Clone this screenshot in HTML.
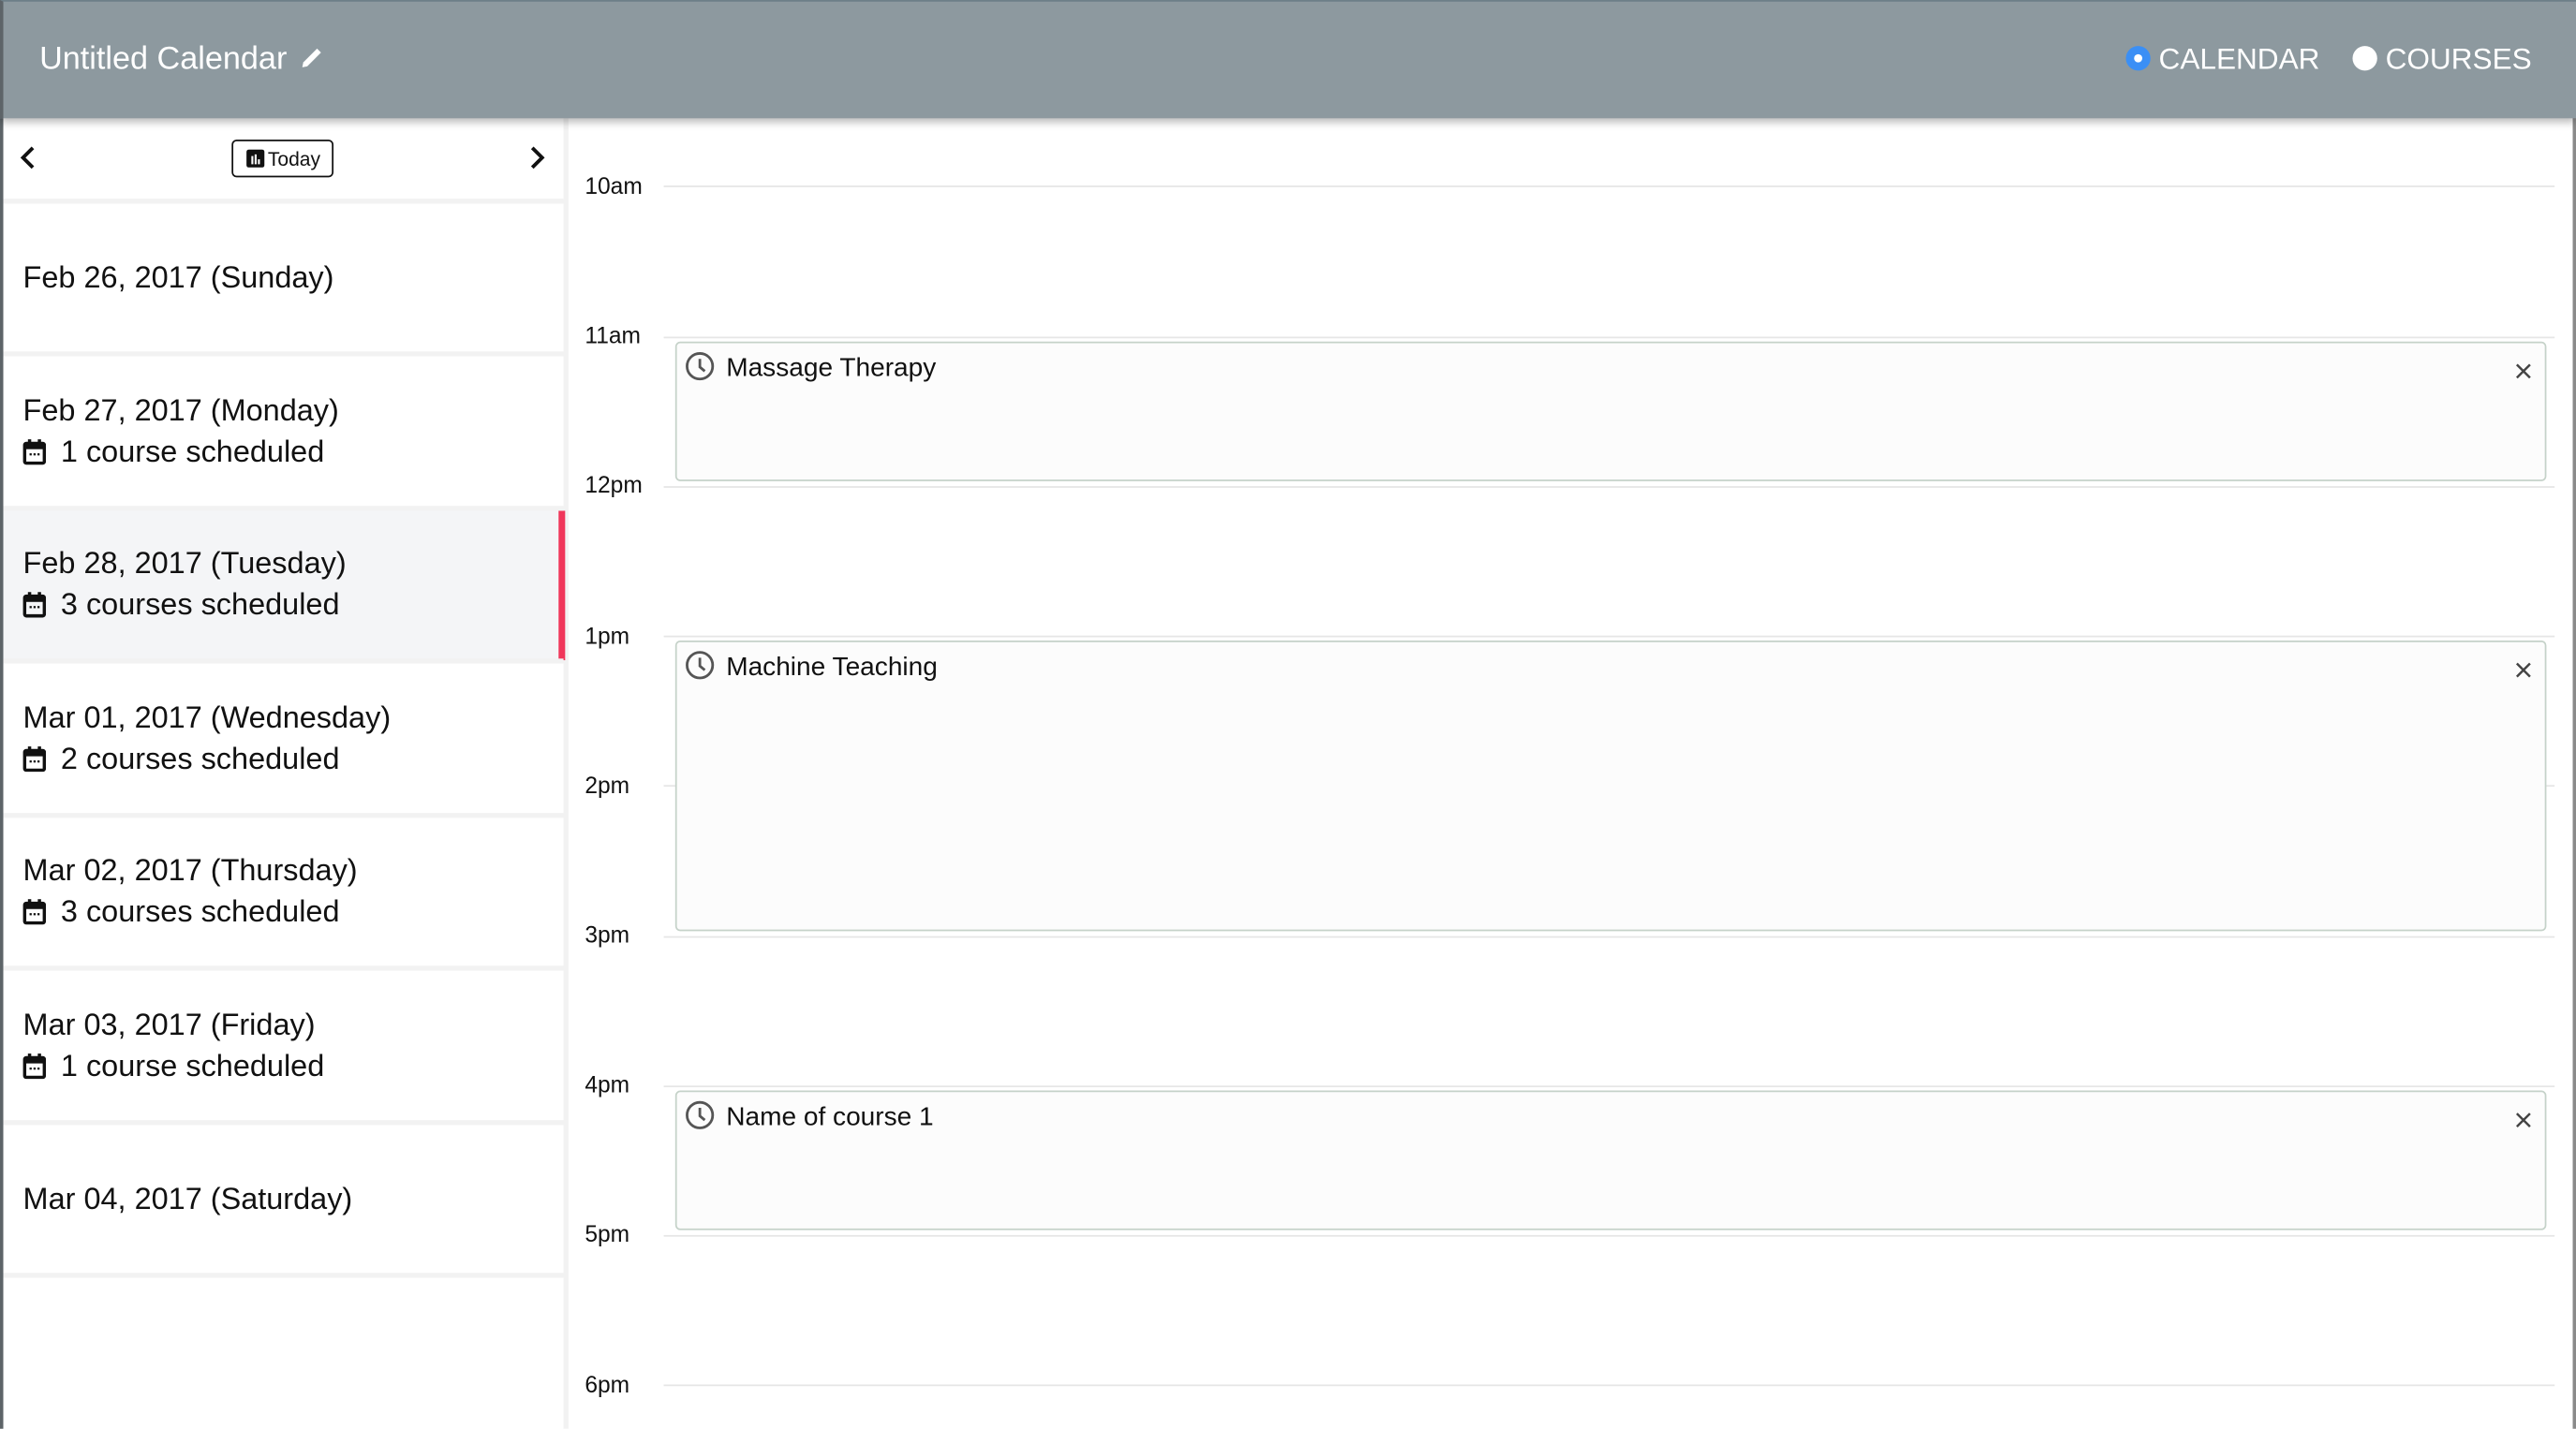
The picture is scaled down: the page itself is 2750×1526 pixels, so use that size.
<!DOCTYPE html>
<html><head><meta charset="utf-8"><style>
*{margin:0;padding:0;box-sizing:border-box}
html,body{width:2750px;height:1526px;overflow:hidden;background:#fff}
#w{position:absolute;left:0;top:0;width:1568px;height:870px;transform:scale(1.75383);transform-origin:0 0;font-family:"Liberation Sans",sans-serif;color:#111;background:#fff;overflow:hidden}
.a{position:absolute}
.hdr{left:0;top:0;width:1568px;height:72px;background:#8d999f;box-shadow:0 2px 5px rgba(0,0,0,.3);z-index:5;border-left:2px solid #5d6468;border-top:1px solid #6d7f88}
.ttl{left:22px;top:24px;font-size:19.5px;color:#fff}
.rad{top:25px;font-size:18px;color:#fff}
.sep{left:2px;width:341px;height:3px;background:#f2f2f2}
.row{left:2px;width:341px}
.d{position:absolute;left:12px;font-size:18.5px;white-space:nowrap}
.s{position:absolute;left:12px;font-size:18.5px;white-space:nowrap}
.s svg{vertical-align:-2px;margin-right:9px}
.tl{left:356px;font-size:14px}
.ln{left:404px;width:1151px;height:1px;background:#e6e6e6}
.ev{left:411px;width:1139px;border:1px solid #c5d2c9;border-radius:3px;background:#fcfcfc}
.ev .n{position:absolute;left:30px;top:7px;font-size:16px}
.ev svg.c{position:absolute;left:5px;top:5px}
.ev .x{position:absolute;right:8px;top:12px}
</style></head><body><div id="w">
<div class="a hdr">
 <div class="a ttl">Untitled Calendar <svg width="16" height="16" viewBox="0 0 16 16" style="vertical-align:-1px;margin-left:2px"><path d="M2 14 L2.6 11 L11 2.6 L13.4 5 L5 13.4 Z" fill="#fff"/></svg></div>
 <div class="a rad" style="left:1292px"><span style="display:inline-block;width:15px;height:15px;border-radius:50%;background:#3b8ff5;vertical-align:-1px;position:relative"><span style="position:absolute;left:5px;top:5px;width:5px;height:5px;border-radius:50%;background:#fff"></span></span> CALENDAR</div>
 <div class="a rad" style="left:1430px"><span style="display:inline-block;width:15px;height:15px;border-radius:50%;background:#fff;vertical-align:-1px"></span> COURSES</div>
</div>
<div class="a" style="left:0;top:0;width:2px;height:870px;background:#5d6468"></div>
<div class="a" style="left:1566px;top:0;width:2px;height:870px;background:#8a8a8a"></div>
<div class="a" style="left:343px;top:72px;width:3px;height:798px;background:#f2f2f2"></div>
<svg class="a" style="left:11px;top:89px" width="12" height="14" viewBox="0 0 12 14"><path d="M9 1 L3 7 L9 13" stroke="#111" stroke-width="2.2" fill="none"/></svg>
<svg class="a" style="left:321px;top:89px" width="12" height="14" viewBox="0 0 12 14"><path d="M3 1 L9 7 L3 13" stroke="#111" stroke-width="2.2" fill="none"/></svg>
<div class="a" style="left:141px;top:85px;width:62px;height:23px;border:1.3px solid #111;border-radius:3px;font-size:12px;padding:4px 0 0 8px;white-space:nowrap"><svg width="11" height="11" viewBox="0 0 11 11" style="vertical-align:-1px;margin-right:2px"><rect width="11" height="11" rx="1.5" fill="#111"/><rect x="3" y="4" width="1.2" height="5" fill="#fff"/><rect x="5" y="3" width="1.2" height="6" fill="#fff"/><rect x="7" y="6" width="1.2" height="3" fill="#fff"/></svg>Today</div>
<div class="a" style="left:2px;top:311px;width:341px;height:91px;background:#f4f5f7"></div>
<div class="a" style="left:340px;top:311px;width:4px;height:91px;background:#f0365a"></div>
<div class="a sep" style="top:121px"></div>
<div class="a sep" style="top:214px"></div>
<div class="a sep" style="top:308px"></div>
<div class="a sep" style="top:401px"></div>
<div class="a sep" style="top:495px"></div>
<div class="a sep" style="top:588px"></div>
<div class="a sep" style="top:682px"></div>
<div class="a sep" style="top:775px"></div>
<div class="a row" style="top:0">
<div class="d" style="top:158px">Feb 26, 2017 (Sunday)</div>
<div class="d" style="top:239px">Feb 27, 2017 (Monday)</div>
<div class="s" style="top:264px"><svg width="14" height="16" viewBox="0 0 14 16"><rect x="1" y="3" width="12" height="12" rx="1" fill="none" stroke="#111" stroke-width="2"/><rect x="1" y="3" width="12" height="3.5" fill="#111"/><rect x="3" y="0.5" width="2" height="3" fill="#111"/><rect x="9" y="0.5" width="2" height="3" fill="#111"/><rect x="4" y="9" width="1.3" height="1.3" fill="#111"/><rect x="6.4" y="9" width="1.3" height="1.3" fill="#111"/><rect x="8.8" y="9" width="1.3" height="1.3" fill="#111"/></svg>1 course scheduled</div>
<div class="d" style="top:332px">Feb 28, 2017 (Tuesday)</div>
<div class="s" style="top:357px"><svg width="14" height="16" viewBox="0 0 14 16"><rect x="1" y="3" width="12" height="12" rx="1" fill="none" stroke="#111" stroke-width="2"/><rect x="1" y="3" width="12" height="3.5" fill="#111"/><rect x="3" y="0.5" width="2" height="3" fill="#111"/><rect x="9" y="0.5" width="2" height="3" fill="#111"/><rect x="4" y="9" width="1.3" height="1.3" fill="#111"/><rect x="6.4" y="9" width="1.3" height="1.3" fill="#111"/><rect x="8.8" y="9" width="1.3" height="1.3" fill="#111"/></svg>3 courses scheduled</div>
<div class="d" style="top:426px">Mar 01, 2017 (Wednesday)</div>
<div class="s" style="top:451px"><svg width="14" height="16" viewBox="0 0 14 16"><rect x="1" y="3" width="12" height="12" rx="1" fill="none" stroke="#111" stroke-width="2"/><rect x="1" y="3" width="12" height="3.5" fill="#111"/><rect x="3" y="0.5" width="2" height="3" fill="#111"/><rect x="9" y="0.5" width="2" height="3" fill="#111"/><rect x="4" y="9" width="1.3" height="1.3" fill="#111"/><rect x="6.4" y="9" width="1.3" height="1.3" fill="#111"/><rect x="8.8" y="9" width="1.3" height="1.3" fill="#111"/></svg>2 courses scheduled</div>
<div class="d" style="top:519px">Mar 02, 2017 (Thursday)</div>
<div class="s" style="top:544px"><svg width="14" height="16" viewBox="0 0 14 16"><rect x="1" y="3" width="12" height="12" rx="1" fill="none" stroke="#111" stroke-width="2"/><rect x="1" y="3" width="12" height="3.5" fill="#111"/><rect x="3" y="0.5" width="2" height="3" fill="#111"/><rect x="9" y="0.5" width="2" height="3" fill="#111"/><rect x="4" y="9" width="1.3" height="1.3" fill="#111"/><rect x="6.4" y="9" width="1.3" height="1.3" fill="#111"/><rect x="8.8" y="9" width="1.3" height="1.3" fill="#111"/></svg>3 courses scheduled</div>
<div class="d" style="top:613px">Mar 03, 2017 (Friday)</div>
<div class="s" style="top:638px"><svg width="14" height="16" viewBox="0 0 14 16"><rect x="1" y="3" width="12" height="12" rx="1" fill="none" stroke="#111" stroke-width="2"/><rect x="1" y="3" width="12" height="3.5" fill="#111"/><rect x="3" y="0.5" width="2" height="3" fill="#111"/><rect x="9" y="0.5" width="2" height="3" fill="#111"/><rect x="4" y="9" width="1.3" height="1.3" fill="#111"/><rect x="6.4" y="9" width="1.3" height="1.3" fill="#111"/><rect x="8.8" y="9" width="1.3" height="1.3" fill="#111"/></svg>1 course scheduled</div>
<div class="d" style="top:719px">Mar 04, 2017 (Saturday)</div>
</div>
<div class="a tl" style="top:105px">10am</div><div class="a ln" style="top:113px"></div>
<div class="a tl" style="top:196px">11am</div><div class="a ln" style="top:205px"></div>
<div class="a tl" style="top:287px">12pm</div><div class="a ln" style="top:296px"></div>
<div class="a tl" style="top:379px">1pm</div><div class="a ln" style="top:387px"></div>
<div class="a tl" style="top:470px">2pm</div><div class="a ln" style="top:478px"></div>
<div class="a tl" style="top:561px">3pm</div><div class="a ln" style="top:570px"></div>
<div class="a tl" style="top:652px">4pm</div><div class="a ln" style="top:661px"></div>
<div class="a tl" style="top:743px">5pm</div><div class="a ln" style="top:752px"></div>
<div class="a tl" style="top:835px">6pm</div><div class="a ln" style="top:843px"></div>
<div class="a ev" style="top:208px;height:85px"><svg class="c" width="18" height="18" viewBox="0 0 18 18"><circle cx="9" cy="9" r="7.8" fill="none" stroke="#555" stroke-width="1.6"/><path d="M9 4.5 V9.5 L12 12" fill="none" stroke="#555" stroke-width="1.6"/></svg><div class="n">Massage Therapy</div><svg class="x" width="10" height="10" viewBox="0 0 10 10"><path d="M1 1L9 9M9 1L1 9" stroke="#444" stroke-width="1.4"/></svg></div>
<div class="a ev" style="top:390px;height:177px"><svg class="c" width="18" height="18" viewBox="0 0 18 18"><circle cx="9" cy="9" r="7.8" fill="none" stroke="#555" stroke-width="1.6"/><path d="M9 4.5 V9.5 L12 12" fill="none" stroke="#555" stroke-width="1.6"/></svg><div class="n">Machine Teaching</div><svg class="x" width="10" height="10" viewBox="0 0 10 10"><path d="M1 1L9 9M9 1L1 9" stroke="#444" stroke-width="1.4"/></svg></div>
<div class="a ev" style="top:664px;height:85px"><svg class="c" width="18" height="18" viewBox="0 0 18 18"><circle cx="9" cy="9" r="7.8" fill="none" stroke="#555" stroke-width="1.6"/><path d="M9 4.5 V9.5 L12 12" fill="none" stroke="#555" stroke-width="1.6"/></svg><div class="n">Name of course 1</div><svg class="x" width="10" height="10" viewBox="0 0 10 10"><path d="M1 1L9 9M9 1L1 9" stroke="#444" stroke-width="1.4"/></svg></div>
</div></body></html>
